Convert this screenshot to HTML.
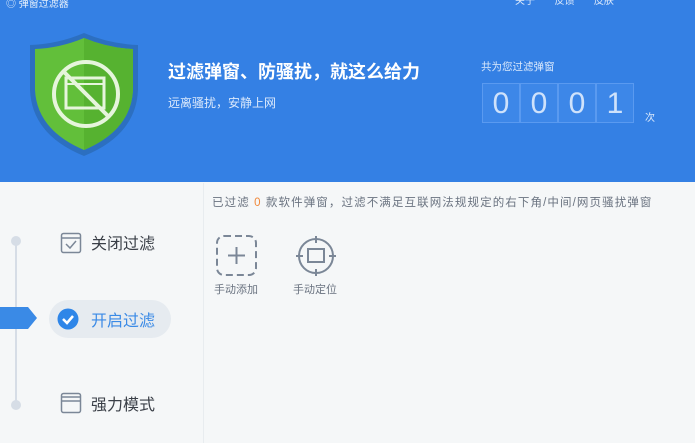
<!DOCTYPE html>
<html><head><meta charset="utf-8"><style>
*{margin:0;padding:0;box-sizing:border-box}
body{width:695px;height:443px;overflow:hidden;background:#f5f7f8;font-family:"Liberation Sans","Noto Sans CJK SC",sans-serif;position:relative}
.hdr{position:absolute;left:0;top:0;width:695px;height:182px;background:#3480e4}
.a{position:absolute;white-space:nowrap}
.cell{position:absolute;top:83px;width:38px;height:40px;border:1px solid #5a9af0;background:#3d87e8;color:#cfe2fb;font-size:30px;text-align:center;line-height:40px;font-weight:300}
</style></head><body>
<div class="hdr"></div>
<div class="a" style="left:6px;top:-5px;color:#e6f0fc;font-size:10px">◎ 弹窗过滤器</div>
<div class="a" style="left:515px;top:-8px;color:#dce9fb;font-size:10px">关于&nbsp;&nbsp;&nbsp;&nbsp;&nbsp;&nbsp;&nbsp;反馈&nbsp;&nbsp;&nbsp;&nbsp;&nbsp;&nbsp;&nbsp;皮肤</div>
<svg class="a" style="left:28px;top:30px" width="112" height="128" viewBox="0 0 112 128">
<path d="M56 3 Q82 14 110 15 L110 60 Q108 105 56 126 Q4 105 2 60 L2 15 Q30 14 56 3Z" fill="#2c6fc0"/>
<path d="M56 8 Q80 18 105 19 L105 60 Q103 100 56 120 Q9 100 7 60 L7 19 Q32 18 56 8Z" fill="#62bf3a"/>
<path d="M56 8 Q80 18 105 19 L105 60 Q103 100 56 120Z" fill="#56b230"/>
<circle cx="58" cy="64" r="32" fill="none" stroke="#e6f5dc" stroke-width="4"/>
<rect x="38" y="48" width="38" height="30" fill="none" stroke="#e6f5dc" stroke-width="3"/>
<line x1="38" y1="54" x2="76" y2="54" stroke="#e6f5dc" stroke-width="2"/>
<line x1="35" y1="41" x2="81" y2="87" stroke="#e6f5dc" stroke-width="4"/>
</svg>
<div class="a" style="left:168px;top:58px;color:#fff;font-size:18px;font-weight:bold">过滤弹窗、防骚扰，就这么给力</div>
<div class="a" style="left:168px;top:94px;color:#dbe9fc;font-size:12px">远离骚扰，安静上网</div>
<div class="a" style="left:481px;top:59px;color:#dbe9fc;font-size:10.5px">共为您过滤弹窗</div>
<div class="cell" style="left:482px">0</div>
<div class="cell" style="left:520px">0</div>
<div class="cell" style="left:558px">0</div>
<div class="cell" style="left:596px">1</div>
<div class="a" style="left:645px;top:109px;color:#dbe9fc;font-size:10px">次</div>
<div class="a" style="left:203px;top:183px;width:1px;height:260px;background:#e8ecef"></div>
<div class="a" style="left:15px;top:240px;width:2px;height:166px;background:#d6dde6"></div>
<div class="a" style="left:11px;top:236px;width:10px;height:10px;border-radius:50%;background:#d6dde6"></div>
<div class="a" style="left:11px;top:400px;width:10px;height:10px;border-radius:50%;background:#d6dde6"></div>
<svg class="a" style="left:0;top:307px" width="40" height="22"><path d="M0 0 H28 L37 11 L28 22 H0Z" fill="#3a8ae6"/></svg>
<svg class="a" style="left:60px;top:232px" width="22" height="22"><rect x="1.5" y="1.5" width="19" height="19" rx="2" fill="none" stroke="#7b8797" stroke-width="1.5"/><line x1="2" y1="6" x2="20" y2="6" stroke="#7b8797" stroke-width="1.5"/><path d="M6 12 L10 16 L16 9" fill="none" stroke="#7b8797" stroke-width="1.5"/></svg>
<div class="a" style="left:91px;top:230px;color:#3a3f47;font-size:16px">关闭过滤</div>
<div class="a" style="left:49px;top:300px;width:122px;height:38px;border-radius:19px;background:#e6ebf0"></div>
<svg class="a" style="left:57px;top:308px" width="22" height="22"><circle cx="11" cy="11" r="10.5" fill="#2f86e8"/><path d="M6 11 L10 15 L16 8" fill="none" stroke="#fff" stroke-width="2.5"/></svg>
<div class="a" style="left:91px;top:307px;color:#3a8ae6;font-size:16px">开启过滤</div>
<svg class="a" style="left:60px;top:392px" width="22" height="22"><rect x="1.5" y="1.5" width="19" height="19" rx="2" fill="none" stroke="#7b8797" stroke-width="1.5"/><line x1="2" y1="5" x2="20" y2="5" stroke="#7b8797" stroke-width="1.5"/><line x1="2" y1="9" x2="20" y2="9" stroke="#7b8797" stroke-width="1.5"/></svg>
<div class="a" style="left:91px;top:391px;color:#3a3f47;font-size:16px">强力模式</div>
<div class="a" style="left:212px;top:194px;color:#6a7380;font-size:11.5px;letter-spacing:1.1px">已过滤 <span style="color:#f0883a">0</span> 款软件弹窗，过滤不满足互联网法规规定的右下角/中间/网页骚扰弹窗</div>
<svg class="a" style="left:215px;top:234px" width="44" height="44"><rect x="2" y="2" width="39" height="39" rx="7" fill="none" stroke="#7b8797" stroke-width="2" stroke-dasharray="7 4"/><path d="M21.5 13 V30 M13 21.5 H30" stroke="#7b8797" stroke-width="2"/></svg>
<div class="a" style="left:214px;top:281px;color:#6a7380;font-size:11px">手动添加</div>
<svg class="a" style="left:294px;top:234px" width="44" height="44"><circle cx="22" cy="22" r="17" fill="none" stroke="#7b8797" stroke-width="2"/><rect x="14" y="15" width="16" height="13" fill="none" stroke="#7b8797" stroke-width="2"/><path d="M22 2 V9 M22 35 V42 M2 22 H9 M35 22 H42" stroke="#7b8797" stroke-width="2"/></svg>
<div class="a" style="left:293px;top:281px;color:#6a7380;font-size:11px">手动定位</div>
</body></html>
